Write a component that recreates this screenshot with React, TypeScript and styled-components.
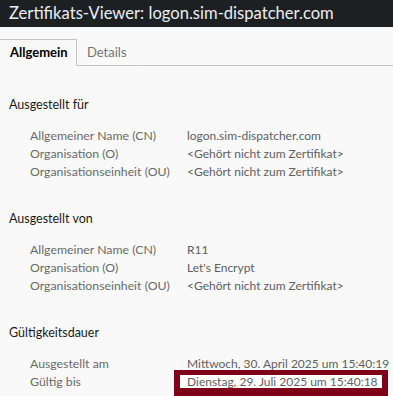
import styled, { createGlobalStyle } from "styled-components";

const GlobalStyle = createGlobalStyle`
    html, body {
        margin: 0;
        padding: 0;
        background: #f9f9f9;
        font-family: Lato, "Noto Sans", sans-serif;
    }
`;

type Field = { label: string; value: string; highlight?: boolean };
type Section = { title: string; fields: Field[] };

const NOT_PART = "<Gehört nicht zum Zertifikat>";

const sections: Section[] = [
    {
        title: "Ausgestellt für",
        fields: [
            { label: "Allgemeiner Name (CN)", value: "logon.sim-dispatcher.com" },
            { label: "Organisation (O)", value: NOT_PART },
            { label: "Organisationseinheit (OU)", value: NOT_PART },
        ],
    },
    {
        title: "Ausgestellt von",
        fields: [
            { label: "Allgemeiner Name (CN)", value: "R11" },
            { label: "Organisation (O)", value: "Let's Encrypt" },
            { label: "Organisationseinheit (OU)", value: NOT_PART },
        ],
    },
    {
        title: "Gültigkeitsdauer",
        fields: [
            { label: "Ausgestellt am", value: "Mittwoch, 30. April 2025 um 15:40:19" },
            { label: "Gültig bis", value: "Dienstag, 29. Juli 2025 um 15:40:18", highlight: true },
        ],
    },
];

const App: React.FC = () => {
    return (
        <Page>
            <GlobalStyle />
            <TitleBar>Zertifikats-Viewer: logon.sim-dispatcher.com</TitleBar>
            <TabBar>
                <Tab $active>Allgemein</Tab>
                <Tab>Details</Tab>
                <TabFill />
            </TabBar>
            <Content>
                {sections.map((section) => (
                    <SectionBlock key={section.title}>
                        <SectionTitle>{section.title}</SectionTitle>
                        <FieldList>
                            {section.fields.map((f) => (
                                <FieldRow key={f.label}>
                                    <Label>{f.label}</Label>
                                    <Value $highlight={f.highlight}>{f.value}</Value>
                                </FieldRow>
                            ))}
                        </FieldList>
                    </SectionBlock>
                ))}
            </Content>
        </Page>
    );
};
export default App;

const Page = styled.div`
    width: 393px;
    height: 396px;
    overflow: hidden;
    background: #f9f9f9;
`;

const TitleBar = styled.div`
    height: 27px;
    background: #1d2023;
    color: #e8eef4;
    font-size: 16.6px;
    line-height: 27px;
    padding-left: 9px;
    white-space: nowrap;
`;

const TabBar = styled.div`
    display: flex;
    margin-top: 13px;
    height: 26px;
`;

const Tab = styled.div<{ $active?: boolean }>`
    width: ${(p) => (p.$active ? "66px" : "auto")};
    height: 25px;
    padding: 0 0 0 10px;
    font-size: 13px;
    line-height: 25px;
    color: ${(p) => (p.$active ? "#000" : "#737373")};
    font-weight: ${(p) => (p.$active ? 700 : 400)};
    border-top: 1px solid ${(p) => (p.$active ? "#c4c4c4" : "transparent")};
    border-right: 1px solid ${(p) => (p.$active ? "#c4c4c4" : "transparent")};
    border-bottom: 1px solid ${(p) => (p.$active ? "transparent" : "#c4c4c4")};
    margin-top: -1px;
    padding-right: ${(p) => (p.$active ? "0" : "10px")};
`;

const TabFill = styled.div`
    flex: 1;
    border-bottom: 1px solid #c4c4c4;
`;

const Content = styled.div`
    display: flex;
    flex-direction: column;
    gap: 29px;
    padding: 30px 0 0 9px;
`;

const SectionBlock = styled.div`
    display: flex;
    flex-direction: column;
    gap: 13px;
`;

const SectionTitle = styled.div`
    font-size: 12.5px;
    line-height: 18px;
    color: #1a1a1a;
`;

const FieldList = styled.div`
    display: flex;
    flex-direction: column;
    padding-left: 21px;
`;

const FieldRow = styled.div`
    display: grid;
    grid-template-columns: 157px auto;
    line-height: 18px;
    white-space: nowrap;
`;

const Label = styled.div`
    font-size: 12.3px;
    color: #6a6a6a;
`;

const Value = styled.div<{ $highlight?: boolean }>`
    font-size: 12px;
    color: #606060;
    position: relative;
    z-index: 0;
    &::before {
        content: "";
        display: ${(p) => (p.$highlight ? "block" : "none")};
        position: absolute;
        box-sizing: border-box;
        top: -3px;
        left: -13px;
        width: 214px;
        height: 26px;
        border-style: solid;
        border-color: #7e0019;
        border-width: 5px 6px 8px 6px;
        background: #ffffff;
        z-index: -1;
    }
`;
